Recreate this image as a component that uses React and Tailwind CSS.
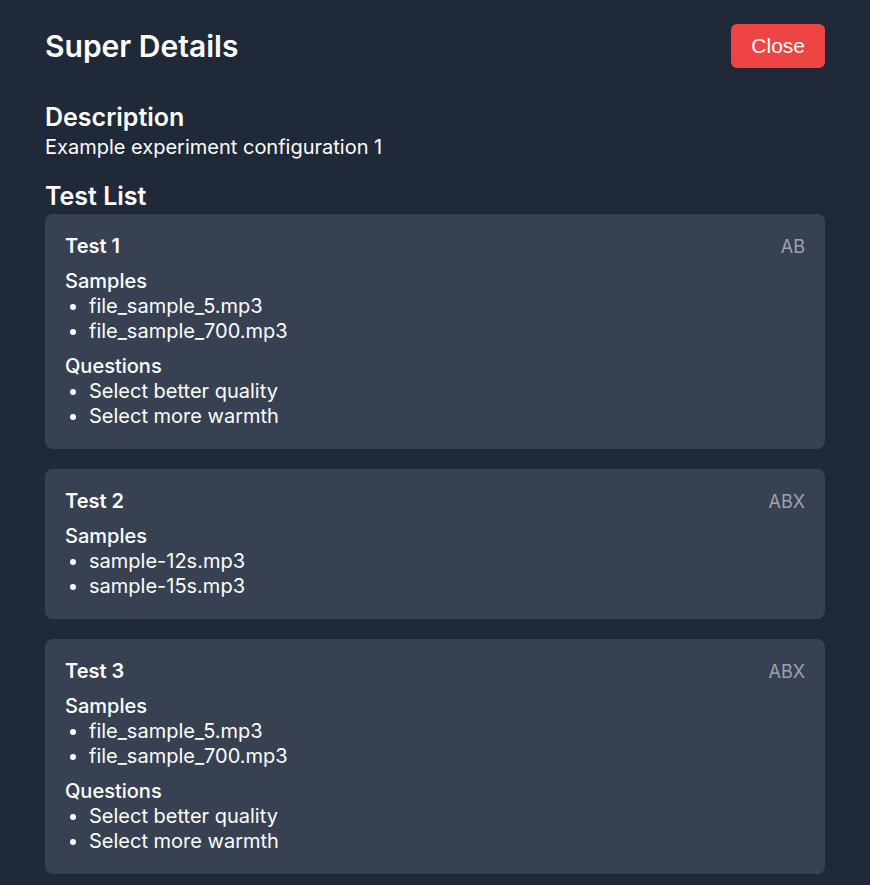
import React from 'react';

const tests = [
  {
    name: 'Test 1',
    type: 'AB',
    samples: ['file_sample_5.mp3', 'file_sample_700.mp3'],
    questions: ['Select better quality', 'Select more warmth'],
  },
  {
    name: 'Test 2',
    type: 'ABX',
    samples: ['sample-12s.mp3', 'sample-15s.mp3'],
    questions: [],
  },
  {
    name: 'Test 3',
    type: 'ABX',
    samples: ['file_sample_5.mp3', 'file_sample_700.mp3'],
    questions: ['Select better quality', 'Select more warmth'],
  },
];

function TestCard({ test }) {
  return (
    <div className="rounded-lg bg-[#374151] p-5 text-white">
      <div className="flex items-center justify-between leading-[25px]">
        <h4 className="text-[20px] font-semibold">{test.name}</h4>
        <span className="text-[18px] text-[#9ca3af]">{test.type}</span>
      </div>
      <div className="mt-2.5">
        <h5 className="text-[20px] leading-[25px] font-medium">Samples</h5>
        <ul className="list-disc pl-6 text-[20px] leading-[25px]">
          {test.samples.map((s, i) => (
            <li key={i}>{s}</li>
          ))}
        </ul>
      </div>
      {test.questions.length > 0 && (
        <div className="mt-2.5">
          <h5 className="text-[20px] leading-[25px] font-medium">Questions</h5>
          <ul className="list-disc pl-6 text-[20px] leading-[25px]">
            {test.questions.map((q, i) => (
              <li key={i}>{q}</li>
            ))}
          </ul>
        </div>
      )}
    </div>
  );
}

export default function App() {
  return (
    <div className="min-h-screen bg-[#1f2937] px-[45px] pt-6 pb-6 text-white font-['Inter',sans-serif]">
      <div className="flex items-center justify-between">
        <h2 className="text-[30px] leading-9 font-semibold">Super Details</h2>
        <button className="h-11 rounded-md bg-[#ef4444] px-5 text-[21px] text-white font-['Liberation_Sans',sans-serif]">
          Close
        </button>
      </div>

      <div className="mt-[33px]">
        <h3 className="text-[25px] leading-8 font-semibold">Description</h3>
        <p className="text-[20px] leading-7">Example experiment configuration 1</p>
      </div>

      <div className="mt-[19px]">
        <h3 className="text-[25px] leading-8 font-semibold">Test List</h3>
        <div className="mt-0.5 flex flex-col gap-5">
          {tests.map((t, i) => (
            <TestCard key={i} test={t} />
          ))}
        </div>
      </div>
    </div>
  );
}
